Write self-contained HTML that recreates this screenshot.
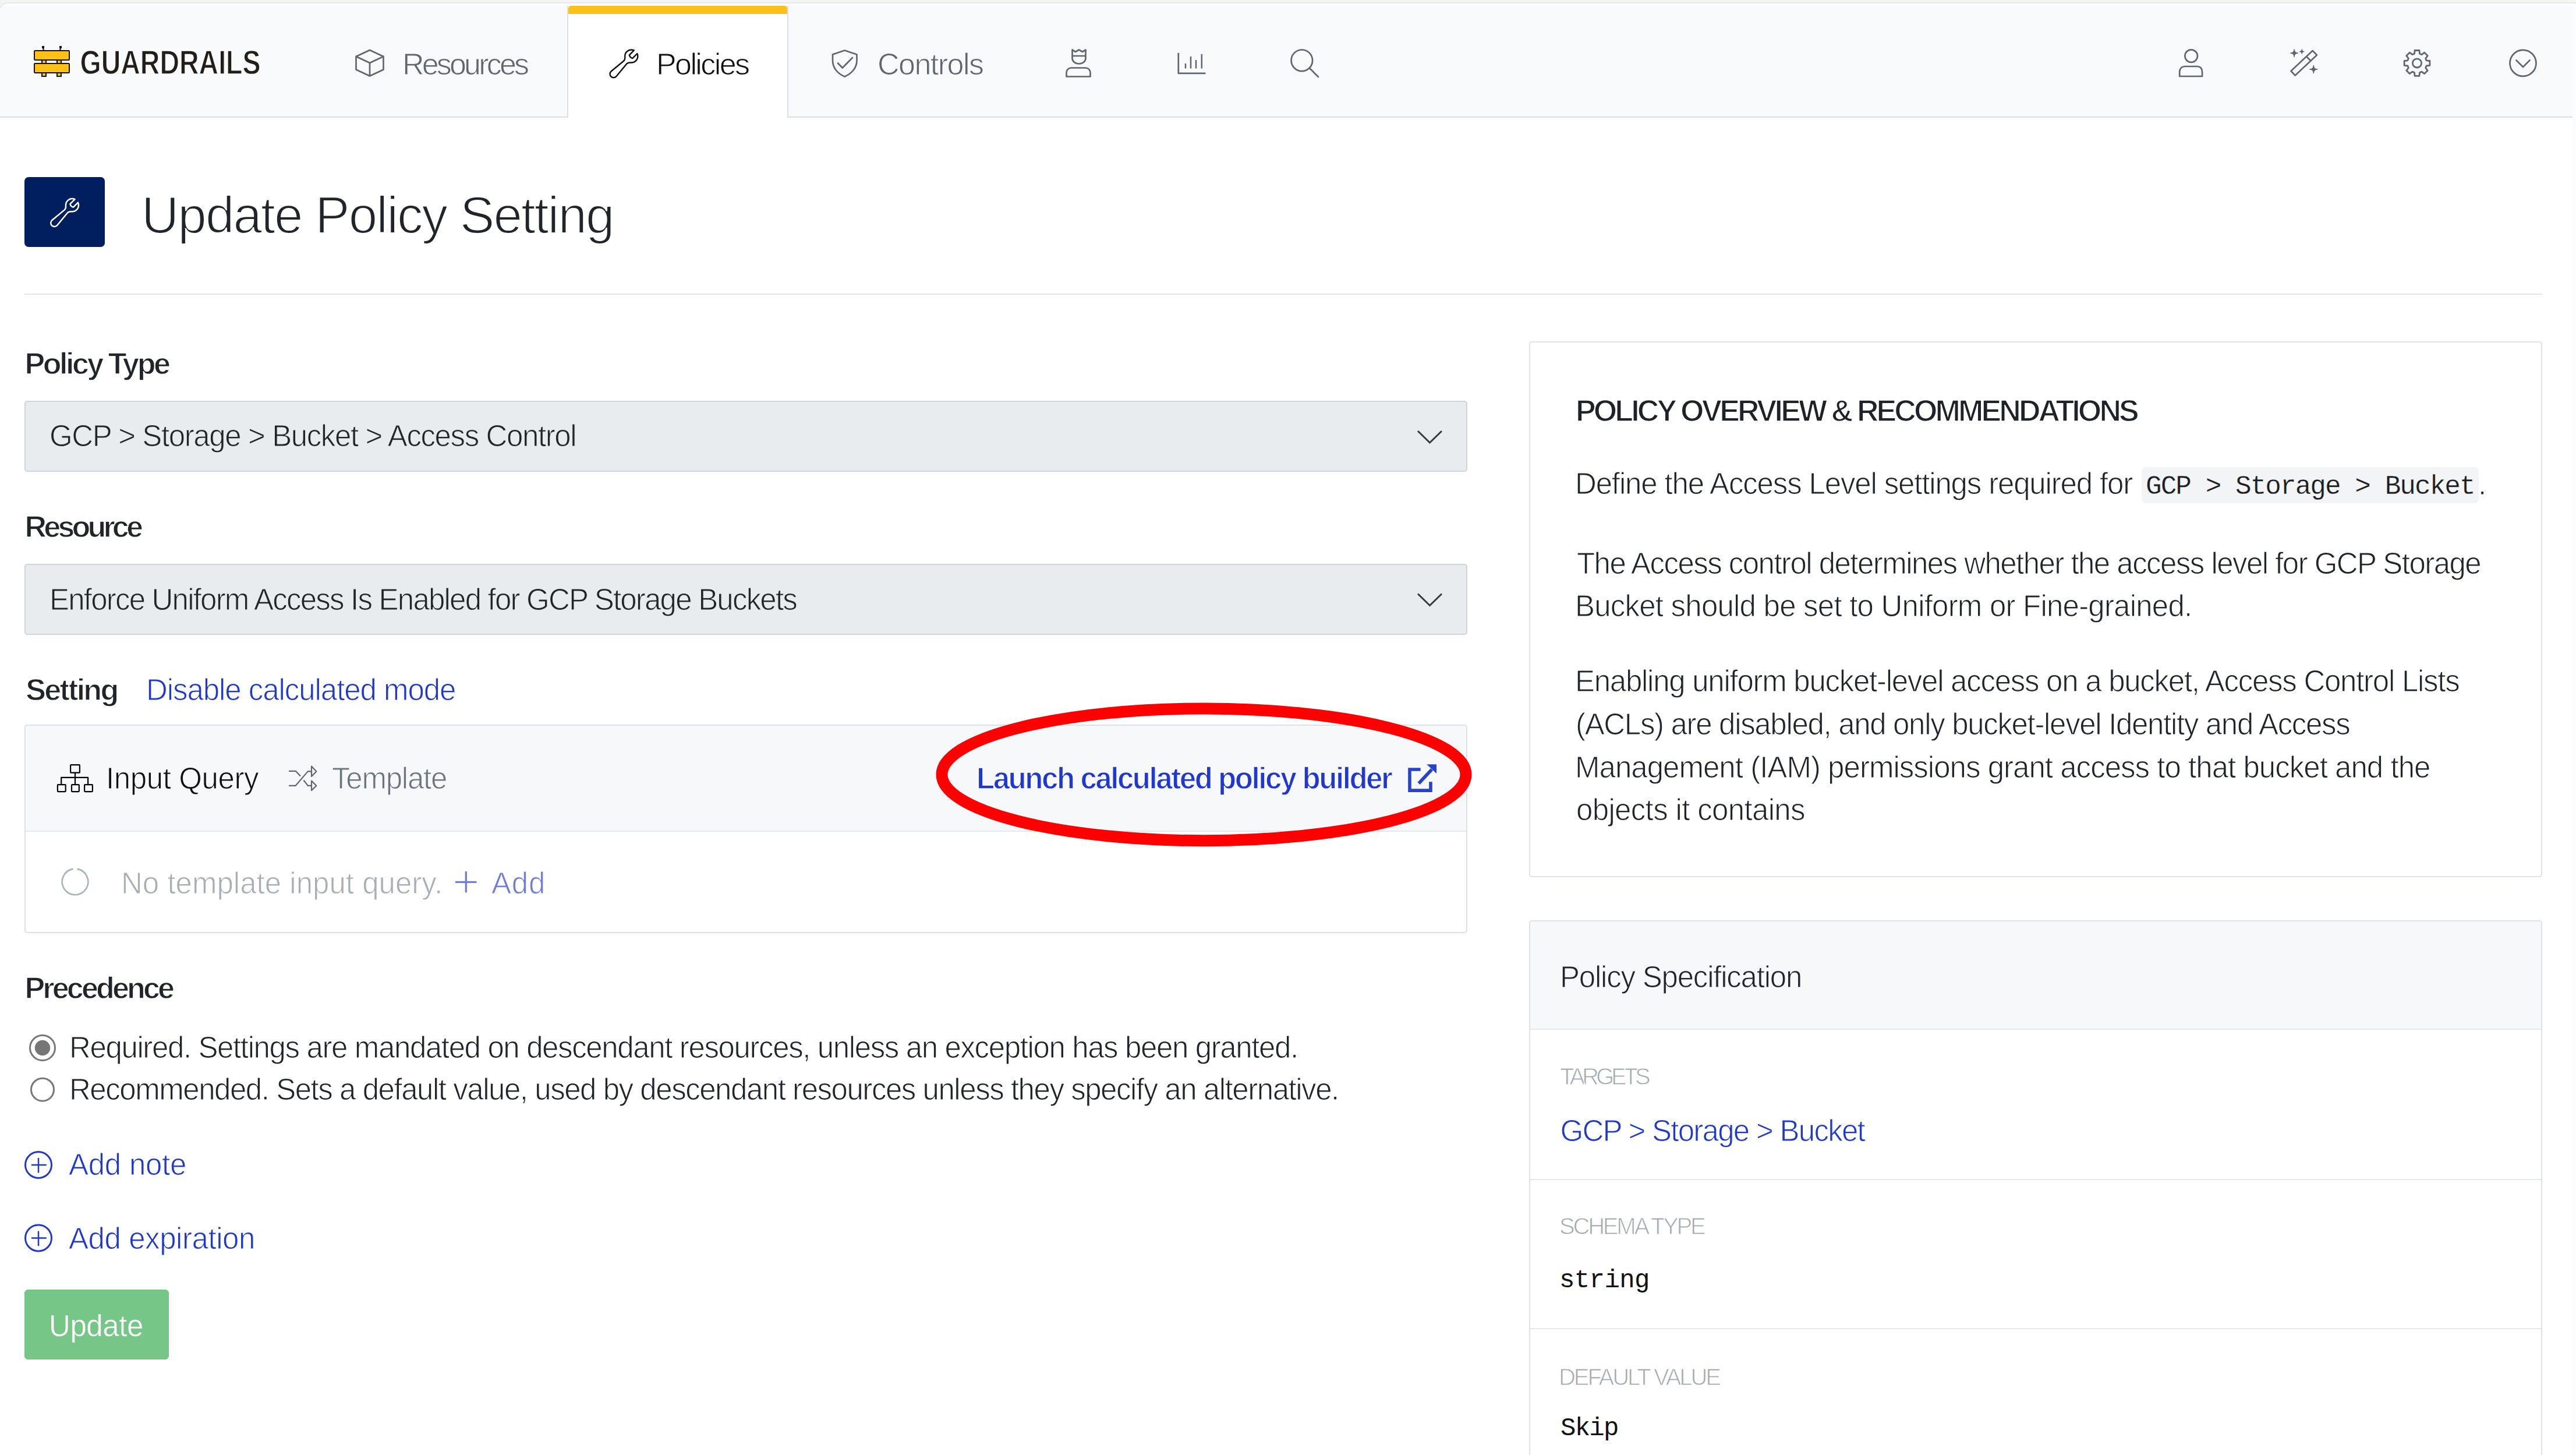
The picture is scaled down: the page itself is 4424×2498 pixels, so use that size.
<!DOCTYPE html>
<html><head><meta charset="utf-8"><title>Update Policy Setting</title>
<style>
html,body{margin:0;padding:0;background:#fff;}
body{width:4424px;height:2498px;position:relative;overflow:hidden;font-family:"Liberation Sans",sans-serif;}
.t{position:absolute;white-space:nowrap;}
</style></head><body>

<div style="position:absolute;left:0;top:0;width:4424px;height:5px;background:#f5f5f5"></div>
<div style="position:absolute;left:0;top:4px;width:4424px;height:2px;background:#e9e9e9"></div>
<div style="position:absolute;left:4418px;top:6px;width:6px;height:2492px;background:#fcfcfc"></div>
<!-- nav -->
<div style="position:absolute;left:0;top:10px;width:4418px;height:190px;background:#f9fafb;border-bottom:2px solid #dcdfe4;border-top-left-radius:5px"></div>
<svg style="position:absolute;left:0;top:0" width="20" height="20"><path d="M0 0 H16 V5 Q3 5.5 0 14.5 Z" fill="#f3f3f3"/><path d="M16 5 Q3 5.5 0 14.5" fill="none" stroke="#e6e6e6" stroke-width="1.5"/></svg>
<div style="position:absolute;left:974px;top:10px;width:376px;height:192px;background:#fff;border-left:2px solid #dcdfe4;border-right:2px solid #dcdfe4"></div>
<div style="position:absolute;left:976px;top:10px;width:376px;height:14px;background:#fbc118;border-radius:5px 5px 0 0"></div>
<!-- title -->
<div style="position:absolute;left:42px;top:304px;width:138px;height:120px;background:#011f5e;border-radius:7px"></div>
<div style="position:absolute;left:42px;top:504px;width:4324px;height:2px;background:#e5e5e5"></div>
<!-- selects -->
<div style="position:absolute;left:42px;top:688px;width:2474px;height:118px;background:#e9ecef;border:2px solid #ced4da;border-radius:5px"></div>
<div style="position:absolute;left:42px;top:968px;width:2474px;height:118px;background:#e9ecef;border:2px solid #ced4da;border-radius:5px"></div>
<!-- setting box -->
<div style="position:absolute;left:42px;top:1244px;width:2474px;height:354px;background:#fff;border:2px solid #dde1e6;border-radius:5px;overflow:hidden">
  <div style="position:absolute;left:0;top:0;width:2474px;height:180px;background:#f7f8fa;border-bottom:2px solid #e5e8eb"></div>
</div>
<!-- update button -->
<div style="position:absolute;left:42px;top:2214px;width:246px;height:118px;background:#75c687;border:1px solid #6fc481;border-radius:6px"></div>
<!-- card 1 -->
<div style="position:absolute;left:2626px;top:586px;width:1736px;height:916px;background:#fff;border:2px solid #dfe2e6;border-radius:5px"></div>
<div style="position:absolute;left:3678px;top:802px;width:579px;height:62px;background:#f3f4f6;border-radius:8px"></div>
<!-- card 2 -->
<div style="position:absolute;left:2626px;top:1580px;width:1736px;height:1000px;background:#fff;border:2px solid #dfe2e6;border-radius:5px;overflow:hidden">
  <div style="position:absolute;left:0;top:0;width:1736px;height:184px;background:#f7f8fa;border-bottom:2px solid #e5e8eb"></div>
  <div style="position:absolute;left:0;top:442px;width:1736px;height:2px;background:#e5e8eb"></div>
  <div style="position:absolute;left:0;top:698px;width:1736px;height:2px;background:#e5e8eb"></div>
</div>


<svg style="position:absolute;left:0;top:0" width="4424" height="2498" viewBox="0 0 4424 2498">
  <!-- logo -->
  <g fill="#fbc118" stroke="#15120c" stroke-width="2">
    <rect x="72" y="103" width="7" height="6"/>
    <rect x="98" y="103" width="7" height="6"/>
    <rect x="72" y="125" width="7" height="6"/>
    <rect x="98" y="125" width="7" height="6"/>
    <rect x="59" y="87" width="60" height="16" rx="1.2"/>
    <rect x="59" y="109" width="60" height="16" rx="1.2"/>
  </g>
  <g fill="#15120c">
    <rect x="72" y="79" width="4" height="4"/><rect x="73.5" y="82" width="2" height="5"/>
    <rect x="102" y="79" width="4" height="4"/><rect x="102.5" y="82" width="2" height="5"/>
  </g>
  <text x="137.5" y="126.5" font-family="Liberation Sans" font-weight="700" font-size="58" fill="#221f1a" stroke="#f9fafb" stroke-width="1.3" textLength="310" lengthAdjust="spacingAndGlyphs">GUARDRAILS</text>
  <!-- nav icons -->
  <g fill="none" stroke="#5f666e" stroke-width="2.7" stroke-linecap="round" stroke-linejoin="round">
    <path d="M635 86 L611.5 97 L611.5 119.5 L635 130.5 L658.5 119.5 L658.5 97 Z M611.5 97 L635 108 L658.5 97 M635 108 L635 130.5"/>
    <path d="M1450.6 86.5 L1430 93.5 L1430 104 C1430 117 1439 126.5 1450.6 131.5 C1462 126.5 1471.5 117 1471.5 104 L1471.5 93.5 Z M1439 108.5 L1446.8 116.5 L1464 99"/>
    <path d="M1841.5 85.5 L1841.5 100 C1841.5 105.5 1846.5 109.5 1853 109.5 C1859.5 109.5 1864.5 105.5 1864.5 100 L1864.5 85.5 L1859 89 L1853 85.5 L1847 89 Z M1841.5 96 H1864.5 M1831.5 131.5 V125 C1831.5 120 1835 116.5 1840 116.5 H1864 C1869 116.5 1872.5 120 1872.5 125 V131.5 Z"/>
    <path d="M2023.8 91 V125.8 H2070.5" stroke-linecap="butt"/>
    <path d="M2036 109 V117.5 M2045 97 V117.5 M2054 103 V117.5 M2063.8 93 V117.5" stroke-linecap="butt" stroke-width="2.5"/>
    <circle cx="2235.8" cy="103.8" r="18.3"/>
    <path d="M2249.5 117.5 L2264 132"/>
    <circle cx="3763.2" cy="96.1" r="10.8"/>
    <path d="M3743.2 131 V124 C3743.2 118 3747 114 3753 114 H3773 C3779 114 3782.1 118 3782.1 124 V131 Z"/>
    <path d="M3971.6 87 L3979 94.5 L3941.7 129.5 L3934.5 122 Z M3961 97 L3968 104" stroke-width="2.6"/>
    <path d="M4146.4 92.3 L4147.1 86.5 L4154.9 86.5 L4155.6 92.3 L4159.1 93.7 L4163.7 90.2 L4169.2 95.7 L4165.7 100.3 L4167.1 103.8 L4172.9 104.5 L4172.9 112.3 L4167.1 113.0 L4165.7 116.5 L4169.2 121.1 L4163.7 126.6 L4159.1 123.1 L4155.6 124.5 L4154.9 130.3 L4147.1 130.3 L4146.4 124.5 L4142.9 123.1 L4138.3 126.6 L4132.8 121.1 L4136.3 116.5 L4134.9 113.0 L4129.1 112.3 L4129.1 104.5 L4134.9 103.8 L4136.3 100.3 L4132.8 95.7 L4138.3 90.2 L4142.9 93.7 Z" stroke-width="2.8"/>
    <circle cx="4151" cy="108.4" r="7.6" stroke-width="2.8"/>
    <circle cx="4333" cy="108.4" r="22.5"/>
    <path d="M4321.5 103.5 L4333 115 L4344.5 103.5"/>
  </g>
  <g fill="#5f666e" stroke="#5f666e" stroke-width="1.5" stroke-linejoin="round">
    <path d="M3940.1 85 Q3940.1 91.2 3946.3 91.2 Q3940.1 91.2 3940.1 97.4 Q3940.1 91.2 3933.9 91.2 Q3940.1 91.2 3940.1 85 Z"/>
    <path d="M3953.2 85 Q3953.2 88.5 3956.7 88.5 Q3953.2 88.5 3953.2 92 Q3953.2 88.5 3949.7 88.5 Q3953.2 88.5 3953.2 85 Z"/>
    <path d="M3973.3 112.4 Q3973.3 118.9 3979.8 118.9 Q3973.3 118.9 3973.3 125.4 Q3973.3 118.9 3966.8 118.9 Q3973.3 118.9 3973.3 112.4 Z"/>
  </g>
  <!-- nav wrench (active) -->
  <g transform="translate(1042 80) scale(2.45)" fill="none" stroke="#111" stroke-width="1.0" stroke-linecap="round" stroke-linejoin="round">
    <path d="M21.75 6.75a4.5 4.5 0 0 1-4.884 4.484c-1.076-.091-2.264.071-2.95.904l-7.152 8.684a2.548 2.548 0 1 1-3.586-3.586l8.684-7.152c.833-.686.995-1.874.904-2.95a4.5 4.5 0 0 1 6.336-4.486l-3.276 3.276a3.004 3.004 0 0 0 2.25 2.25l3.276-3.276c.256.565.398 1.192.398 1.852Z"/>
  </g>
  <!-- title wrench -->
  <g transform="translate(81.7 335.7) scale(2.45)" fill="none" stroke="#fff" stroke-width="1.02" stroke-linecap="round" stroke-linejoin="round">
    <path d="M21.75 6.75a4.5 4.5 0 0 1-4.884 4.484c-1.076-.091-2.264.071-2.95.904l-7.152 8.684a2.548 2.548 0 1 1-3.586-3.586l8.684-7.152c.833-.686.995-1.874.904-2.95a4.5 4.5 0 0 1 6.336-4.486l-3.276 3.276a3.004 3.004 0 0 0 2.25 2.25l3.276-3.276c.256.565.398 1.192.398 1.852Z"/>
  </g>
  <!-- select chevrons -->
  <g fill="none" stroke="#343a40" stroke-width="3" stroke-linecap="butt" stroke-linejoin="miter">
    <path d="M2435 740 L2455.5 760 L2476 740"/>
    <path d="M2435 1019.5 L2455.5 1039.5 L2476 1019.5"/>
  </g>
  <!-- input query icon -->
  <g fill="none" stroke="#000" stroke-width="2.2" stroke-linejoin="round">
    <rect x="121.1" y="1313.1" width="15.8" height="13.6" rx="1"/>
    <rect x="98.9" y="1347.1" width="13.8" height="12" rx="1"/>
    <rect x="123" y="1347.1" width="12.8" height="12" rx="1"/>
    <rect x="145.1" y="1347.1" width="13.8" height="12" rx="1"/>
    <path d="M129 1327 V1346 M105.2 1346 V1334.9 H151.1 V1346"/>
  </g>
  <!-- template shuffle icon -->
  <g fill="none" stroke="#5f666e" stroke-width="2.2" stroke-linejoin="round">
    <path d="M496 1323.8 H507.7 L516 1332.5 M521.5 1339.5 L528.7 1348.8 H535 M496 1348.9 H507.7 L528.7 1324.4 H535"/>
    <path d="M535 1315.5 L543.3 1324.4 L535 1333 Z M535 1340.5 L543.3 1349 L535 1357 Z"/>
  </g>
  <!-- external link icon -->
  <g fill="none" stroke="#2843c8" stroke-width="5.6" stroke-linejoin="miter">
    <path d="M2439.6 1321 H2421 V1357.1 H2457 V1342.3"/>
    <path d="M2436.5 1345 L2459 1321"/>
  </g>
  <path d="M2450.2 1312.3 H2467 V1328 Z" fill="#2843c8"/>
  <!-- spinner -->
  <path d="M132.5 1491.9 A22.3 22.3 0 1 1 125.5 1491.9" fill="none" stroke="#a9b2bf" stroke-width="2.6"/>
  <!-- + Add -->
  <path d="M782 1514.3 H818.5 M800.3 1496 V1532.3" stroke="#6f7ede" stroke-width="3.3" fill="none"/>
  <!-- radios -->
  <circle cx="73" cy="1799" r="21.5" fill="#fff" stroke="#767676" stroke-width="3"/>
  <circle cx="73" cy="1799" r="13.2" fill="#767676"/>
  <circle cx="73" cy="1870.7" r="19.5" fill="#fff" stroke="#767676" stroke-width="3"/>
  <!-- plus circles -->
  <g fill="none" stroke="#2039cc" stroke-width="3">
    <circle cx="66" cy="2000" r="22.5"/>
    <path d="M54 2000 H79.8 M66 1988 V2013.6" stroke-width="2.5"/>
    <circle cx="66" cy="2125.5" r="22.5"/>
    <path d="M54 2125.5 H79.8 M66 2113.5 V2139" stroke-width="2.5"/>
  </g>
  <!-- red ellipse -->
  <ellipse cx="2067.5" cy="1329.8" rx="450" ry="113.4" fill="none" stroke="#ff0000" stroke-width="20"/>
</svg>

<div class="t" style="left:691.00px;top:84.00px;font-family:'Liberation Sans';font-size:52px;font-weight:400;color:#5f666e;line-height:52px;letter-spacing:-3.819px;-webkit-text-stroke:1.0px #f9fafb;">Resources</div>
<div class="t" style="left:1127.00px;top:84.00px;font-family:'Liberation Sans';font-size:52px;font-weight:400;color:#111111;line-height:52px;letter-spacing:-2.597px;-webkit-text-stroke:1.0px #ffffff;">Policies</div>
<div class="t" style="left:1507.00px;top:84.00px;font-family:'Liberation Sans';font-size:52px;font-weight:400;color:#5f666e;line-height:52px;letter-spacing:-1.518px;-webkit-text-stroke:1.0px #f9fafb;">Controls</div>
<div class="t" style="left:243.00px;top:325.00px;font-family:'Liberation Sans';font-size:89px;font-weight:400;color:#212529;line-height:89px;letter-spacing:-1.922px;-webkit-text-stroke:2.0px #ffffff;">Update Policy Setting</div>
<div class="t" style="left:42.50px;top:597.80px;font-family:'Liberation Sans';font-size:52px;font-weight:700;color:#212529;line-height:52px;letter-spacing:-3.472px;-webkit-text-stroke:1.3px #ffffff;">Policy Type</div>
<div class="t" style="left:85.00px;top:723.00px;font-family:'Liberation Sans';font-size:51px;font-weight:400;color:#212529;line-height:51px;letter-spacing:-1.396px;-webkit-text-stroke:1.0px #e9ecef;">GCP &gt; Storage &gt; Bucket &gt; Access Control</div>
<div class="t" style="left:42.50px;top:878.00px;font-family:'Liberation Sans';font-size:52px;font-weight:700;color:#212529;line-height:52px;letter-spacing:-4.797px;-webkit-text-stroke:1.3px #ffffff;">Resource</div>
<div class="t" style="left:85.00px;top:1004.00px;font-family:'Liberation Sans';font-size:51px;font-weight:400;color:#212529;line-height:51px;letter-spacing:-1.793px;-webkit-text-stroke:1.0px #e9ecef;">Enforce Uniform Access Is Enabled for GCP Storage Buckets</div>
<div class="t" style="left:44.30px;top:1157.80px;font-family:'Liberation Sans';font-size:52px;font-weight:700;color:#212529;line-height:52px;letter-spacing:-2.725px;-webkit-text-stroke:1.3px #ffffff;">Setting</div>
<div class="t" style="left:251.00px;top:1159.00px;font-family:'Liberation Sans';font-size:51px;font-weight:400;color:#2039cc;line-height:51px;letter-spacing:-1.058px;-webkit-text-stroke:1.0px #ffffff;">Disable calculated mode</div>
<div class="t" style="left:182.00px;top:1311.00px;font-family:'Liberation Sans';font-size:51px;font-weight:400;color:#111111;line-height:51px;letter-spacing:-0.398px;-webkit-text-stroke:1.0px #f7f8fa;">Input Query</div>
<div class="t" style="left:570.00px;top:1311.00px;font-family:'Liberation Sans';font-size:51px;font-weight:400;color:#6c757d;line-height:51px;letter-spacing:-1.225px;-webkit-text-stroke:1.0px #f7f8fa;">Template</div>
<div class="t" style="left:1677.00px;top:1311.00px;font-family:'Liberation Sans';font-size:51px;font-weight:700;color:#2039cc;line-height:51px;letter-spacing:-2.446px;-webkit-text-stroke:1.3px #f7f8fa;">Launch calculated policy builder</div>
<div class="t" style="left:208.00px;top:1491.00px;font-family:'Liberation Sans';font-size:51px;font-weight:400;color:#a9aeb4;line-height:51px;letter-spacing:0.013px;-webkit-text-stroke:1.0px #ffffff;">No template input query.</div>
<div class="t" style="left:844.00px;top:1491.00px;font-family:'Liberation Sans';font-size:51px;font-weight:400;color:#6f7ede;line-height:51px;letter-spacing:0.810px;-webkit-text-stroke:1.0px #ffffff;">Add</div>
<div class="t" style="left:42.50px;top:1670.30px;font-family:'Liberation Sans';font-size:52px;font-weight:700;color:#212529;line-height:52px;letter-spacing:-3.839px;-webkit-text-stroke:1.3px #ffffff;">Precedence</div>
<div class="t" style="left:119.00px;top:1772.60px;font-family:'Liberation Sans';font-size:51px;font-weight:400;color:#212529;line-height:51px;letter-spacing:-1.383px;-webkit-text-stroke:1.0px #ffffff;">Required. Settings are mandated on descendant resources, unless an exception has been granted.</div>
<div class="t" style="left:119.00px;top:1844.60px;font-family:'Liberation Sans';font-size:51px;font-weight:400;color:#212529;line-height:51px;letter-spacing:-1.464px;-webkit-text-stroke:1.0px #ffffff;">Recommended. Sets a default value, used by descendant resources unless they specify an alternative.</div>
<div class="t" style="left:118.00px;top:1974.00px;font-family:'Liberation Sans';font-size:51px;font-weight:400;color:#2039cc;line-height:51px;letter-spacing:-0.259px;-webkit-text-stroke:1.0px #ffffff;">Add note</div>
<div class="t" style="left:118.00px;top:2101.00px;font-family:'Liberation Sans';font-size:51px;font-weight:400;color:#2039cc;line-height:51px;letter-spacing:-0.437px;-webkit-text-stroke:1.0px #ffffff;">Add expiration</div>
<div class="t" style="left:84.00px;top:2251.00px;font-family:'Liberation Sans';font-size:51px;font-weight:400;color:#ffffff;line-height:51px;letter-spacing:-0.418px;-webkit-text-stroke:0.5px #73c686;">Update</div>
<div class="t" style="left:2706.00px;top:678.50px;font-family:'Liberation Sans';font-size:52px;font-weight:700;color:#1f2328;line-height:52px;letter-spacing:-3.886px;-webkit-text-stroke:1.6px #ffffff;">POLICY OVERVIEW &amp; RECOMMENDATIONS</div>
<div class="t" style="left:2705.00px;top:805.00px;font-family:'Liberation Sans';font-size:51px;font-weight:400;color:#212529;line-height:51px;letter-spacing:-1.160px;-webkit-text-stroke:1.0px #ffffff;">Define the Access Level settings required for</div>
<div class="t" style="left:3685.00px;top:813.00px;font-family:'Liberation Mono';font-size:46px;font-weight:400;color:#1a1d21;line-height:46px;letter-spacing:-1.938px;-webkit-text-stroke:0.3px #f3f4f6;">GCP &gt; Storage &gt; Bucket</div>
<div class="t" style="left:4256.00px;top:806.00px;font-family:'Liberation Sans';font-size:51px;font-weight:400;color:#212529;line-height:51px;letter-spacing:0.000px;-webkit-text-stroke:1.0px #ffffff;">.</div>
<div class="t" style="left:2708.00px;top:942.00px;font-family:'Liberation Sans';font-size:51px;font-weight:400;color:#212529;line-height:51px;letter-spacing:-1.544px;-webkit-text-stroke:1.0px #ffffff;">The Access control determines whether the access level for GCP Storage</div>
<div class="t" style="left:2705.00px;top:1015.00px;font-family:'Liberation Sans';font-size:51px;font-weight:400;color:#212529;line-height:51px;letter-spacing:-0.785px;-webkit-text-stroke:1.0px #ffffff;">Bucket should be set to Uniform or Fine-grained.</div>
<div class="t" style="left:2705.00px;top:1144.00px;font-family:'Liberation Sans';font-size:51px;font-weight:400;color:#212529;line-height:51px;letter-spacing:-1.270px;-webkit-text-stroke:1.0px #ffffff;">Enabling uniform bucket-level access on a bucket, Access Control Lists</div>
<div class="t" style="left:2706.00px;top:1218.00px;font-family:'Liberation Sans';font-size:51px;font-weight:400;color:#212529;line-height:51px;letter-spacing:-1.329px;-webkit-text-stroke:1.0px #ffffff;">(ACLs) are disabled, and only bucket-level Identity and Access</div>
<div class="t" style="left:2705.00px;top:1292.00px;font-family:'Liberation Sans';font-size:51px;font-weight:400;color:#212529;line-height:51px;letter-spacing:-0.974px;-webkit-text-stroke:1.0px #ffffff;">Management (IAM) permissions grant access to that bucket and the</div>
<div class="t" style="left:2707.00px;top:1365.00px;font-family:'Liberation Sans';font-size:51px;font-weight:400;color:#212529;line-height:51px;letter-spacing:-0.660px;-webkit-text-stroke:1.0px #ffffff;">objects it contains</div>
<div class="t" style="left:2679.00px;top:1651.50px;font-family:'Liberation Sans';font-size:51px;font-weight:400;color:#212529;line-height:51px;letter-spacing:-1.211px;-webkit-text-stroke:1.0px #f7f8fa;">Policy Specification</div>
<div class="t" style="left:2679.00px;top:1828.00px;font-family:'Liberation Sans';font-size:40px;font-weight:400;color:#a1a8b0;line-height:40px;letter-spacing:-5.043px;-webkit-text-stroke:1.0px #ffffff;">TARGETS</div>
<div class="t" style="left:2679.50px;top:1915.50px;font-family:'Liberation Sans';font-size:51px;font-weight:400;color:#2039cc;line-height:51px;letter-spacing:-1.720px;-webkit-text-stroke:1.0px #ffffff;">GCP &gt; Storage &gt; Bucket</div>
<div class="t" style="left:2678.00px;top:2085.00px;font-family:'Liberation Sans';font-size:40px;font-weight:400;color:#a1a8b0;line-height:40px;letter-spacing:-3.204px;-webkit-text-stroke:1.0px #ffffff;">SCHEMA TYPE</div>
<div class="t" style="left:2678.00px;top:2176.00px;font-family:'Liberation Mono';font-size:44px;font-weight:400;color:#111111;line-height:44px;letter-spacing:-0.604px;-webkit-text-stroke:0px #ffffff;">string</div>
<div class="t" style="left:2677.00px;top:2344.00px;font-family:'Liberation Sans';font-size:40px;font-weight:400;color:#a1a8b0;line-height:40px;letter-spacing:-3.059px;-webkit-text-stroke:1.0px #ffffff;">DEFAULT VALUE</div>
<div class="t" style="left:2680.00px;top:2430.00px;font-family:'Liberation Mono';font-size:44px;font-weight:400;color:#111111;line-height:44px;letter-spacing:-1.738px;-webkit-text-stroke:0px #ffffff;">Skip</div>
</body></html>
